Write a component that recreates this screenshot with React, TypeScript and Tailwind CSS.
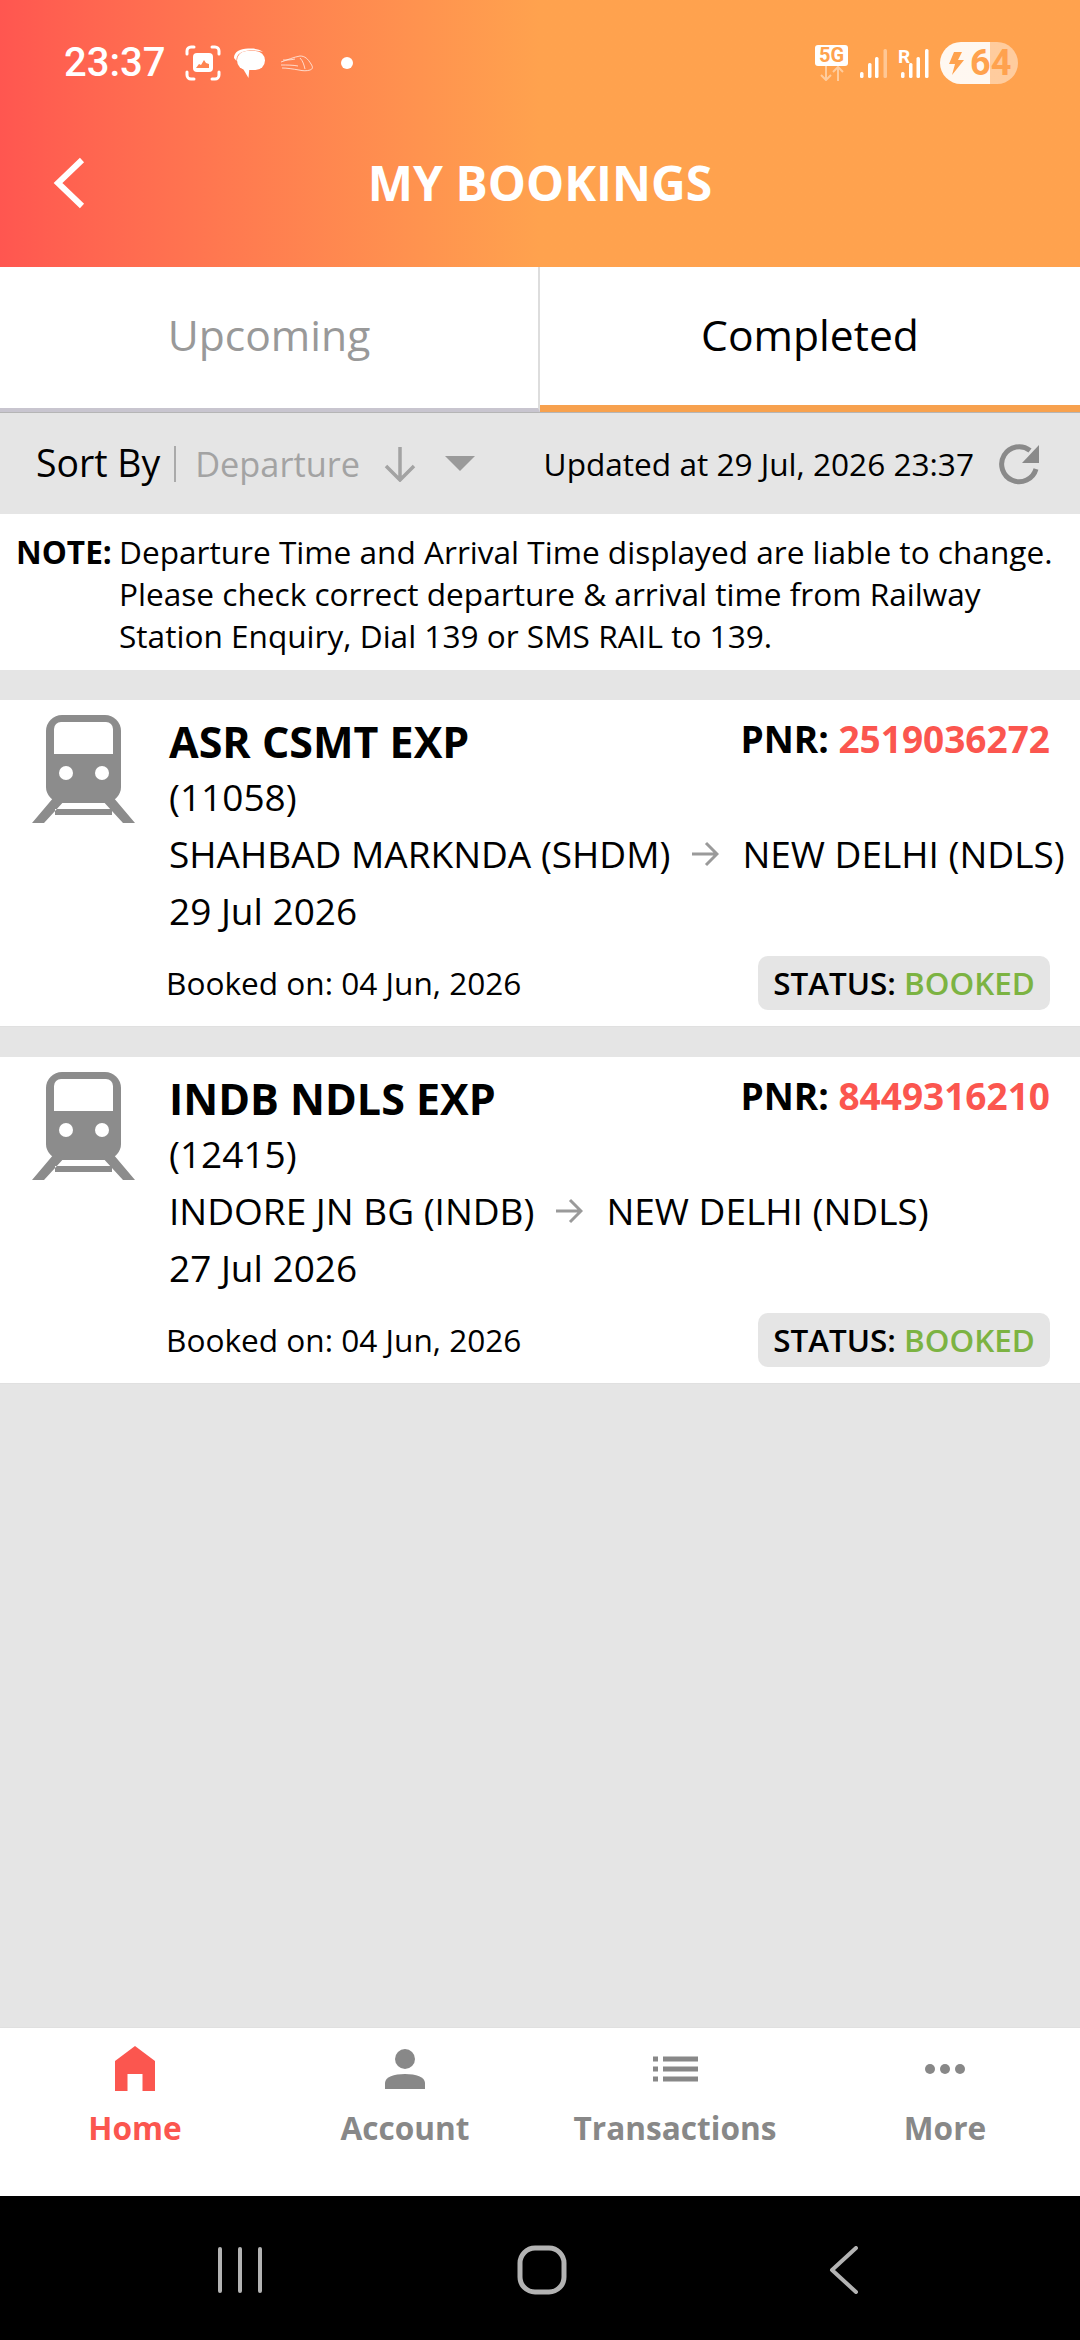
const bookings = [
  {
    name: "ASR CSMT EXP",
    number: "(11058)",
    from: "SHAHBAD MARKNDA (SHDM)",
    to: "NEW DELHI (NDLS)",
    date: "29 Jul 2026",
    pnr: "2519036272",
  },
  {
    name: "INDB NDLS EXP",
    number: "(12415)",
    from: "INDORE JN BG (INDB)",
    to: "NEW DELHI (NDLS)",
    date: "27 Jul 2026",
    pnr: "8449316210",
  },
];

function StatusBar() {
  return (
    <div className="h-[126px] flex items-center pl-[64px] pr-[62px] text-white">
      <span className="font-['Roboto'] font-medium text-[40px] leading-none w-[121px]">23:37</span>
      <svg width="36" height="36" viewBox="0 0 36 36" fill="none" className="mr-[13px]">
        <path d="M2 9V6a4 4 0 0 1 4-4h3M27 2h3a4 4 0 0 1 4 4v3M34 27v3a4 4 0 0 1-4 4h-3M9 34H6a4 4 0 0 1-4-4v-3" stroke="white" strokeWidth="3" strokeLinecap="round" />
        <rect x="8" y="8" width="20" height="19" rx="4" fill="white" />
        <path d="M11 23l3-4 2 1 3-5 2 3 3 1v4z" fill="#ff8450" />
      </svg>
      <svg width="32" height="31" viewBox="0 0 32 31" className="mr-[14px]">
        <path d="M0 10C0 4 6 .5 14 .5h3c5 0 9 1 12 3.500C26 2.800 21 2.300 16 2.500 8 2.800 2 6 2.500 13z" fill="white" />
        <rect x="3" y="3" width="28" height="19" rx="9.500" fill="white" />
        <path d="M8 19l6.500 11 1-11z" fill="white" />
      </svg>
      <svg width="34" height="17" viewBox="0 0 34 17" fill="none" stroke="white" strokeOpacity="0.7" strokeWidth="1" className="mr-[27px]">
        <path d="M1 7c6-2 13-5 19-6 5 0 8 3 11 8 2 3 2 5-1 6-3 1-7 1-11 0-6-1-12-2-17-2" />
        <path d="M1 10c6 0 12 0 17 1M20 3c3 3 4 7 5 11M3 5c4 0 8 0 12-1" />
      </svg>
      <span className="w-[12px] h-[12px] rounded-full bg-white" />
      <div className="ml-auto flex items-center">
        <div className="flex flex-col items-center w-[33px] mr-[12px]">
          <span className="w-[33px] h-[21px] rounded-[3px] bg-white text-[#ffa24e] font-['Roboto'] font-bold text-[20px] leading-[21px] text-center">5G</span>
          <svg width="24" height="15" viewBox="0 0 24 15" fill="none" stroke="white" strokeOpacity="0.45" strokeWidth="2">
            <path d="M6 0v14M1 9l5 5 5-5M18 15V1M13 6l5-5 5 5" />
          </svg>
        </div>
        <svg width="27" height="29" viewBox="0 0 27 29" className="mr-[11px] mt-[1px]">
          <rect x="0" y="23" width="3.500" height="6" rx="1.500" fill="white" />
          <rect x="8" y="14" width="3.500" height="15" rx="1.500" fill="white" />
          <rect x="15" y="8" width="3.500" height="21" rx="1.500" fill="white" />
          <rect x="23.500" y="0" width="3.500" height="29" rx="1.500" fill="white" fillOpacity="0.4" />
        </svg>
        <div className="relative w-[31px] h-[29px] mr-[11px] mt-[1px]">
          <span className="absolute left-0 top-0 font-['Roboto'] font-bold text-[19px] leading-[16px] text-white">R</span>
          <svg width="31" height="29" viewBox="0 0 31 29">
            <rect x="3" y="23" width="3.500" height="6" rx="1.500" fill="white" />
            <rect x="11" y="14" width="3.500" height="15" rx="1.500" fill="white" />
            <rect x="18.500" y="8" width="3.500" height="21" rx="1.500" fill="white" />
            <rect x="27" y="0" width="3.500" height="29" rx="1.500" fill="white" />
          </svg>
        </div>
        <div className="w-[78px] h-[42px] rounded-full flex items-center pl-[8px] bg-[linear-gradient(90deg,rgba(255,255,255,0.92)_50px,rgba(255,255,255,0.45)_50px)] text-[#ffa24e]">
          <svg width="16" height="23" viewBox="0 0 16 23" fill="#ffa24e" className="shrink-0">
            <path d="M6 0h8l-4 8h6L4 23l3-11H1z" />
          </svg>
          <span className="font-['Roboto'] font-bold text-[36px] leading-none ml-[6px]">64</span>
        </div>
      </div>
    </div>
  );
}

function BackIcon() {
  return (
    <svg width="32" height="52" viewBox="0 0 32 52" fill="none" stroke="white" strokeWidth="6" className="ml-[53px]">
      <path d="M29 3L5 26l24 23" />
    </svg>
  );
}

function TrainIcon() {
  return (
    <svg width="103" height="108" viewBox="0 0 103 108" fill="none">
      <path d="M30 0h43a16 16 0 0 1 16 16v56c0 8-6 14-14 16H28c-8-2-14-8-14-16V16A16 16 0 0 1 30 0z" fill="#8c8c8c" />
      <path d="M29 7h45a7 7 0 0 1 7 7v25H22V14a7 7 0 0 1 7-7z" fill="white" />
      <circle cx="34" cy="58" r="7" fill="white" />
      <circle cx="70" cy="58" r="7" fill="white" />
      <path d="M22 82L0 108h12l22-24zM81 82l22 26H91L69 84zM23 94h57v6H23z" fill="#8c8c8c" />
    </svg>
  );
}

function BookingCard({ b }: { b: (typeof bookings)[number] }) {
  return (
    <div className="bg-white h-[327px] flex pl-[32px] border-b border-[#e0e0e0]">
      <div className="w-[137px] shrink-0 pt-[15px]">
        <TrainIcon />
      </div>
      <div className="flex-1 min-w-0 flex flex-col pt-[13px] text-black">
        <div className="flex justify-between items-start h-[55px] pr-[30px]">
          <span className="font-bold text-[43px] leading-[57px]">{b.name}</span>
          <span className="font-bold text-[37px] leading-[52px]">
            PNR: <span className="text-[#fb564f]">{b.pnr}</span>
          </span>
        </div>
        <div className="text-[37px] leading-[57px]">{b.number}</div>
        <div className="text-[37px] leading-[57px] flex items-center whitespace-nowrap">
          {b.from}
          <svg width="28" height="26" viewBox="0 0 28 26" fill="none" stroke="#9a9a9a" strokeWidth="3" className="ml-[21px] mr-[23px]">
            <path d="M1 13h25M15 2l11 11-11 11" />
          </svg>
          {b.to}
        </div>
        <div className="text-[37px] leading-[57px]">{b.date}</div>
        <div className="flex justify-between items-center pr-[30px] mt-[17px] -ml-[3px]">
          <span className="text-[31.6px] leading-[54px]">Booked on: 04 Jun, 2026</span>
          <span className="h-[54px] w-[292px] text-center rounded-[10px] bg-[#e5e5e5] font-semibold text-[31.4px] leading-[54px] whitespace-nowrap">
            STATUS: <span className="text-[#7cb342]">BOOKED</span>
          </span>
        </div>
      </div>
    </div>
  );
}

export default function App() {
  return (
    <div className="w-[1080px] h-[2340px] overflow-hidden flex flex-col bg-[#e5e5e5] font-['Open_Sans',sans-serif]">
      <header className="h-[267px] shrink-0 bg-gradient-to-r from-[#ff5650] to-[#ffa24e] to-50%">
        <StatusBar />
        <div className="h-[114px] grid grid-cols-[1fr_auto_1fr] items-center text-white">
          <BackIcon />
          <h1 className="font-bold text-[48px] leading-none">MY BOOKINGS</h1>
        </div>
      </header>

      <div className="h-[145px] shrink-0 grid grid-cols-2 bg-white text-[42.6px] leading-none">
        <div className="flex items-center justify-center border-r-2 border-[#dddddd] border-b-[4px] border-b-[#c8c5cf] text-[#999999] pb-[7px]">
          Upcoming
        </div>
        <div className="flex items-center justify-center border-b-[7px] border-[#f7a14e] text-black pb-[4px]">
          Completed
        </div>
      </div>

      <div className="h-[102px] shrink-0 flex items-center pl-[36px] pr-[39px] border-t border-[#b5b5b5]">
        <span className="text-[37.4px] text-black">Sort By</span>
        <span className="w-[2px] h-[36px] bg-[#aaaaaa] ml-[14px] mr-[19px]" />
        <span className="text-[34.3px] text-[#a3a3a3]">Departure</span>
        <svg width="32" height="36" viewBox="0 0 32 36" fill="none" stroke="#a3a3a3" strokeWidth="3.5" className="ml-[24px]">
          <path d="M16 1v33M2 20l14 14 14-14" />
        </svg>
        <span className="ml-[29px] w-0 h-0 border-l-[15px] border-r-[15px] border-t-[15px] border-l-transparent border-r-transparent border-t-[#9a9a9a]" />
        <span className="ml-auto text-[31.6px] text-black">Updated at 29 Jul, 2026 23:37</span>
        <svg width="42" height="42" viewBox="0 0 42 42" fill="none" className="ml-[25px]">
          <path d="M37 26A17.500 17.500 0 1 1 31 7.500" stroke="#8a8a8a" strokeWidth="5" />
          <path d="M40 2v18H23z" fill="#8a8a8a" />
        </svg>
      </div>

      <div className="h-[156px] shrink-0 bg-white flex pl-[16px] pt-[17px] text-[31.6px] leading-[42px] text-black">
        <span className="w-[103px] shrink-0 font-bold">NOTE:</span>
        <p className="w-[950px] whitespace-nowrap">
          Departure Time and Arrival Time displayed are liable to change.
          <br />
          Please check correct departure &amp; arrival time from Railway
          <br />
          Station Enquiry, Dial 139 or SMS RAIL to 139.
        </p>
      </div>

      <div className="flex-1 flex flex-col gap-[30px] pt-[30px]">
        {bookings.map((b) => (
          <BookingCard key={b.pnr} b={b} />
        ))}
      </div>

      <nav className="h-[169px] shrink-0 bg-white grid grid-cols-4 border-t border-[#e0e0e0] pt-[18px] text-[31.6px] font-bold leading-none text-[#888888]">
        <div className="flex flex-col items-center text-[#fb564f]">
          <svg width="40" height="46" viewBox="0 0 40 46" className="h-[46px]">
            <path d="M20 0l20 15v30H27.500V28h-15v17H0V15z" fill="#fb564f" />
          </svg>
          <span className="mt-[20px]">Home</span>
        </div>
        <div className="flex flex-col items-center">
          <svg width="40" height="46" viewBox="0 0 40 46" className="h-[46px]">
            <circle cx="20" cy="13" r="10" fill="#888888" />
            <path d="M0 43v-6c0-6 9-9 20-9s20 3 20 9v6z" fill="#888888" />
          </svg>
          <span className="mt-[20px]">Account</span>
        </div>
        <div className="flex flex-col items-center">
          <svg width="45" height="46" viewBox="0 0 45 46" className="h-[46px]">
            <path d="M0 10.500h5v5H0zM10 10.500h35v5H10zM0 20.500h5v5H0zM10 20.500h35v5H10zM0 30.500h5v5H0zM10 30.500h35v5H10z" fill="#888888" />
          </svg>
          <span className="mt-[20px]">Transactions</span>
        </div>
        <div className="flex flex-col items-center">
          <svg width="40" height="46" viewBox="0 0 40 46" className="h-[46px]">
            <circle cx="5" cy="23" r="5" fill="#888888" />
            <circle cx="20" cy="23" r="5" fill="#888888" />
            <circle cx="35" cy="23" r="5" fill="#888888" />
          </svg>
          <span className="mt-[20px]">More</span>
        </div>
      </nav>

      <div className="h-[144px] shrink-0 bg-black flex items-center pl-[217px] pt-[4px]">
        <svg width="46" height="46" viewBox="0 0 46 46" fill="none" stroke="#b3b3b3" strokeWidth="4" strokeLinecap="round">
          <path d="M3 2v42M23 2v42M43 2v42" />
        </svg>
        <svg width="50" height="50" viewBox="0 0 50 50" fill="none" stroke="#b3b3b3" strokeWidth="5" className="ml-[254px]">
          <rect x="3" y="3" width="44" height="44" rx="15" />
        </svg>
        <svg width="30" height="48" viewBox="0 0 30 48" fill="none" stroke="#b3b3b3" strokeWidth="4" strokeLinecap="round" strokeLinejoin="round" className="ml-[262px]">
          <path d="M27 2L3 24l24 22" />
        </svg>
      </div>
    </div>
  );
}
